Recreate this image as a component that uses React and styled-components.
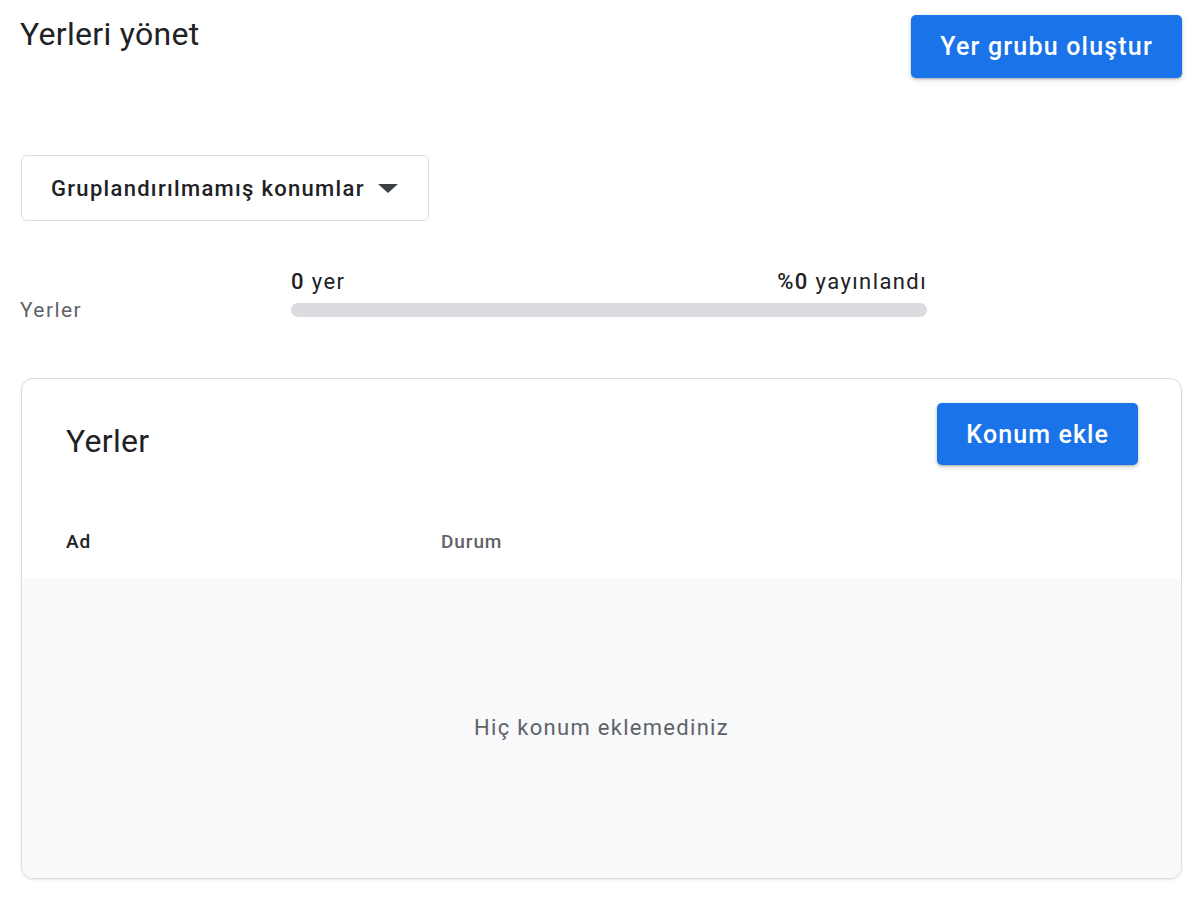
import React from "react";
import styled, { createGlobalStyle } from "styled-components";

const Global = createGlobalStyle`
  html, body { margin: 0; padding: 0; background: #fff; }
  body { font-family: Roboto, "Noto Sans", Arial, sans-serif; color: #202124; }
  * { box-sizing: border-box; }
`;

const Page = styled.div`
  padding: 15px 18px 30px 20px;
  display: flex;
  flex-direction: column;
`;

const Header = styled.div`
  display: flex;
  justify-content: space-between;
  align-items: flex-start;
`;

const Title = styled.h1`
  margin: 1px 0 0;
  font-size: 32px;
  font-weight: 400;
  line-height: 36px;
  letter-spacing: 0.3px;
  color: #202124;
`;

const PrimaryButton = styled.button`
  background: #1a73e8;
  color: #fff;
  border: none;
  border-radius: 5px;
  font-family: Roboto, Arial, sans-serif;
  font-weight: 500;
  font-size: 25px;
  letter-spacing: ${(p) => p.$ls}px;
  height: ${(p) => p.$h}px;
  padding: 0 ${(p) => p.$px}px;
  box-shadow: 0 1px 2px rgba(60, 64, 67, 0.3), 0 2px 5px rgba(60, 64, 67, 0.2);
  cursor: pointer;
`;

const Dropdown = styled.button`
  margin-top: 77px;
  align-self: flex-start;
  width: 408px;
  height: 66px;
  margin-left: 1px;
  border: 1px solid #dadce0;
  border-radius: 6px;
  background: #fff;
  display: flex;
  align-items: center;
  padding: 0 0 0 29px;
  gap: 13px;
  font-family: Roboto, Arial, sans-serif;
  font-size: 22px;
  font-weight: 500;
  letter-spacing: 1.3px;
  color: #202124;
`;

const Caret = styled.span`
  width: 0;
  height: 0;
  border-left: 10px solid transparent;
  border-right: 10px solid transparent;
  border-top: 9px solid #3c4043;
  margin-top: 1px;
`;

const Stats = styled.div`
  margin-top: 48px;
  display: grid;
  grid-template-columns: 271px 636px;
  align-items: end;
`;

const StatLabel = styled.div`
  font-size: 21px;
  letter-spacing: 1.4px;
  color: #5f6368;
  line-height: 24px;
  margin-bottom: -5px;
`;

const StatBlock = styled.div`
  display: flex;
  flex-direction: column;
  gap: 8px;
`;

const StatTexts = styled.div`
  display: flex;
  justify-content: space-between;
  font-size: 22px;
  letter-spacing: 1.4px;
  line-height: 26px;
  color: #202124;
`;

const Strong = styled.b`
  font-weight: 500;
`;

const Bar = styled.div`
  height: 14px;
  border-radius: 7px;
  background: #dadce0;
`;

const Card = styled.section`
  margin-top: 61px;
  margin-left: 1px;
  border: 1px solid #dadce0;
  border-radius: 12px;
  overflow: hidden;
  box-shadow: 0 1px 2px rgba(60, 64, 67, 0.12);
  display: flex;
  flex-direction: column;
  height: 501px;
`;

const CardHeader = styled.div`
  display: flex;
  justify-content: space-between;
  align-items: flex-start;
  padding: 24px 43px 0 44px;
`;

const CardTitle = styled.h2`
  margin: 20px 0 0;
  font-size: 32px;
  line-height: 36px;
  font-weight: 400;
  letter-spacing: 0.3px;
  color: #202124;
`;

const TableHead = styled.div`
  display: grid;
  grid-template-columns: 375px 1fr;
  padding: 0 44px 25px;
  height: 113px;
  align-items: end;
`;

const HeadCell = styled.div`
  font-size: 19px;
  font-weight: 500;
  letter-spacing: 0.9px;
  color: ${(p) => (p.$muted ? "#5f6368" : "#202124")};
`;

const Empty = styled.div`
  flex: 1;
  background: #f8f9fa;
  display: flex;
  justify-content: center;
  padding-top: 137px;
  font-size: 22px;
  letter-spacing: 1.3px;
  color: #5f6368;
`;

export default function App() {
  return (
    <>
      <Global />
      <Page>
        <Header>
          <Title>Yerleri yönet</Title>
          <PrimaryButton $h={63} $px={29} $ls={1.2}>
            Yer grubu oluştur
          </PrimaryButton>
        </Header>
        <Dropdown>
          Gruplandırılmamış konumlar
          <Caret />
        </Dropdown>
        <Stats>
          <StatLabel>Yerler</StatLabel>
          <StatBlock>
            <StatTexts>
              <span>
                <Strong>0</Strong> yer
              </span>
              <span>
                <Strong>%0</Strong> yayınlandı
              </span>
            </StatTexts>
            <Bar />
          </StatBlock>
        </Stats>
        <Card>
          <CardHeader>
            <CardTitle>Yerler</CardTitle>
            <PrimaryButton $h={62} $px={29} $ls={1.1}>
              Konum ekle
            </PrimaryButton>
          </CardHeader>
          <TableHead>
            <HeadCell>Ad</HeadCell>
            <HeadCell $muted>Durum</HeadCell>
          </TableHead>
          <Empty>Hiç konum eklemediniz</Empty>
        </Card>
      </Page>
    </>
  );
}
